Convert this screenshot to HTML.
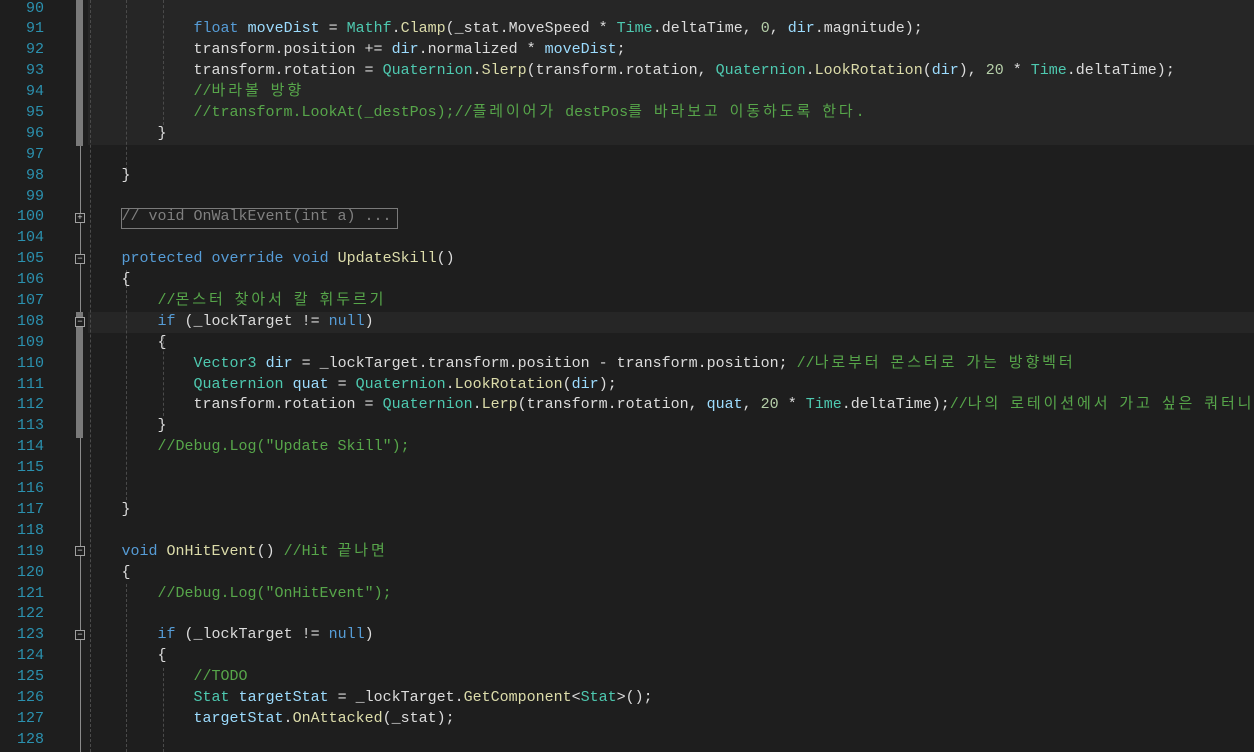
<!DOCTYPE html>
<html><head><meta charset="utf-8"><style>
html,body{margin:0;padding:0;background:#1e1e1e;width:1254px;height:752px;overflow:hidden;position:relative}
pre{margin:0;font-family:"Liberation Mono","Noto Sans CJK KR",monospace;font-size:15px;line-height:20.89px;position:absolute;top:-1.45px}
#nums{left:0;width:44px;text-align:right;color:#2b91af}
#code{left:49.5px;color:#dcdcdc;white-space:pre}
.k{color:#569cd6}.t{color:#4ec9b0}.c{color:#57a64a}.v{color:#9cdcfe}.m{color:#dcdcaa}.n{color:#b5cea8}
i{font-style:normal;letter-spacing:2.9px}
.hl{position:absolute;left:88px;right:0;background:#262626}
.bar{position:absolute;left:76px;width:7px;background:#7a7a7a}
.fl{position:absolute;left:80px;width:1px;background:#8a8a8a}
.box{position:absolute;left:75px;width:8px;height:8px;border:1px solid #a0a0a0;background:#1e1e1e;color:#ddd;font:9px/8px "Liberation Mono",monospace;text-align:center}
.g{position:absolute;width:0;border-left:1px dashed #4a4a4a}
.fold{position:absolute;left:121px;top:208px;width:275px;height:19px;border:1px solid #7a7a7a}
</style></head><body>
<div class="hl" style="top:-1px;height:146px"></div>
<div class="hl" style="top:312px;height:21px"></div>
<div class="fl" style="top:146px;height:606px"></div>
<div class="bar" style="top:0;height:146px"></div>
<div class="bar" style="top:312px;height:126px"></div>
<div class="box" style="top:213px">+</div>
<div class="box" style="top:254px">−</div>
<div class="box" style="top:317px">−</div>
<div class="box" style="top:546px">−</div>
<div class="box" style="top:630px">−</div>
<div class="g" style="left:90px;top:0;height:752px"></div>
<div class="g" style="left:126px;top:0;height:170px"></div>
<div class="g" style="left:126px;top:270px;height:230px"></div>
<div class="g" style="left:126px;top:584px;height:168px"></div>
<div class="g" style="left:163px;top:0;height:125px"></div>
<div class="g" style="left:163px;top:336px;height:80px"></div>
<div class="g" style="left:163px;top:668px;height:84px"></div>
<div class="fold"></div>
<pre id="nums">90
91
92
93
94
95
96
97
98
99
100
104
105
106
107
108
109
110
111
112
113
114
115
116
117
118
119
120
121
122
123
124
125
126
127
128</pre>
<pre id="code">

                <span class="k">float</span> <span class="v">moveDist</span> = <span class="t">Mathf</span>.<span class="m">Clamp</span>(_stat.MoveSpeed * <span class="t">Time</span>.deltaTime, <span class="n">0</span>, <span class="v">dir</span>.magnitude);
                transform.position += <span class="v">dir</span>.normalized * <span class="v">moveDist</span>;
                transform.rotation = <span class="t">Quaternion</span>.<span class="m">Slerp</span>(transform.rotation, <span class="t">Quaternion</span>.<span class="m">LookRotation</span>(<span class="v">dir</span>), <span class="n">20</span> * <span class="t">Time</span>.deltaTime);
                <span class="c">//<i>바라볼</i> <i>방향</i></span>
                <span class="c">//transform.LookAt(_destPos);//<i>플레이어가</i> destPos<i>를</i> <i>바라보고</i> <i>이동하도록</i> <i>한다</i>.</span>
            }

        }

        <span style="color:#808080">// void OnWalkEvent(int a) ...</span>

        <span class="k">protected</span> <span class="k">override</span> <span class="k">void</span> <span class="m">UpdateSkill</span>()
        {
            <span class="c">//<i>몬스터</i> <i>찾아서</i> <i>칼</i> <i>휘두르기</i></span>
            <span class="k">if</span> (_lockTarget != <span class="k">null</span>)
            {
                <span class="t">Vector3</span> <span class="v">dir</span> = _lockTarget.transform.position - transform.position; <span class="c">//<i>나로부터</i> <i>몬스터로</i> <i>가는</i> <i>방향벡터</i></span>
                <span class="t">Quaternion</span> <span class="v">quat</span> = <span class="t">Quaternion</span>.<span class="m">LookRotation</span>(<span class="v">dir</span>);
                transform.rotation = <span class="t">Quaternion</span>.<span class="m">Lerp</span>(transform.rotation, <span class="v">quat</span>, <span class="n">20</span> * <span class="t">Time</span>.deltaTime);<span class="c">//<i>나의</i> <i>로테이션에서</i> <i>가고</i> <i>싶은</i> <i>쿼터니언</i></span>
            }
            <span class="c">//Debug.Log("Update Skill");</span>


        }

        <span class="k">void</span> <span class="m">OnHitEvent</span>() <span class="c">//Hit <i>끝나면</i></span>
        {
            <span class="c">//Debug.Log("OnHitEvent");</span>

            <span class="k">if</span> (_lockTarget != <span class="k">null</span>)
            {
                <span class="c">//TODO</span>
                <span class="t">Stat</span> <span class="v">targetStat</span> = _lockTarget.<span class="m">GetComponent</span>&lt;<span class="t">Stat</span>&gt;();
                <span class="v">targetStat</span>.<span class="m">OnAttacked</span>(_stat);
</pre>
</body></html>
